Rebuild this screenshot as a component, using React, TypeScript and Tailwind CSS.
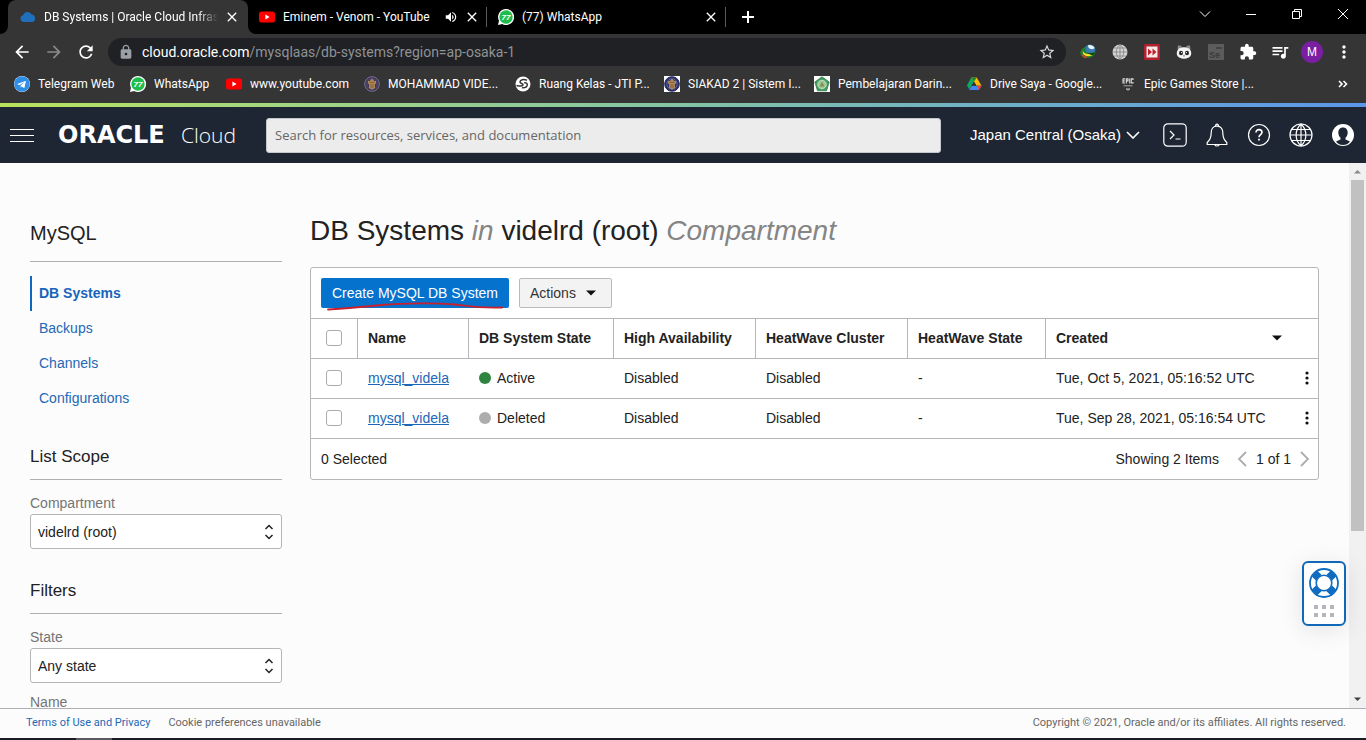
import type { ReactNode } from "react";
import {
  MdArrowBack,
  MdArrowForward,
  MdClose,
  MdExtension,
  MdLock,
  MdMoreVert,
  MdQueueMusic,
  MdRefresh,
  MdStarBorder,
  MdVolumeUp,
} from "react-icons/md";
import { FaTelegram } from "react-icons/fa";

const UI = "font-[Roboto,'Noto_Sans',sans-serif]";
const ARIAL = "font-['Liberation_Sans',Arial,sans-serif]";

/* ---------- favicons ---------- */

function CloudIcon() {
  return (
    <svg viewBox="0 0 16 16" className="size-4 shrink-0" aria-hidden="true">
      <path d="M3.6 13a3.4 3.4 0 0 1-.5-6.7A4.6 4.6 0 0 1 11.700 5.600 3.800 3.800 0 0 1 12.400 13Z" fill="#1f6fbd" />
    </svg>
  );
}

function YouTubeIcon() {
  return (
    <svg viewBox="0 0 16 16" className="size-4 shrink-0" aria-hidden="true">
      <rect x="0" y="2.500" width="16" height="11" rx="2.500" fill="#f00" />
      <path d="M6.400 5.600v4.800L10.600 8Z" fill="#fff" />
    </svg>
  );
}

function WhatsAppIcon() {
  return (
    <svg viewBox="0 0 16 16" className="size-4 shrink-0" aria-hidden="true">
      <path d="M8 0a8 8 0 1 1-3.800 15L0 16l1-4.200A8 8 0 0 1 8 0Z" fill="#fff" />
      <circle cx="8" cy="8" r="6.700" fill="#1fbd4c" />
      <text x="8" y="11" textAnchor="middle" fontSize="8" fontStyle="italic" fontWeight="bold" fontFamily="Liberation Sans" fill="#fff">
        77
      </text>
    </svg>
  );
}

function TelegramIcon() {
  return (
    <span className="grid size-4 shrink-0 place-items-center rounded-full bg-white">
      <FaTelegram className="size-4 text-[#2f8fe6]" />
    </span>
  );
}

function CampusIcon({ framed }: { framed?: boolean }) {
  return (
    <svg viewBox="0 0 16 16" className="size-4 shrink-0" aria-hidden="true">
      {framed && <rect width="16" height="16" fill="#fff" />}
      <circle cx="8" cy="8" r="7.300" fill={framed ? "#2a2f6e" : "#3b3550"} stroke={framed ? "#23285f" : "#7d6f9c"} strokeWidth="1" />
      <circle cx="8" cy="8" r="5.200" fill="none" stroke={framed ? "#6c70a6" : "#5a5080"} strokeWidth="0.800" />
      <path d="M8 2.600 10.200 5H12v2.500l-1 .6V12l-3 1.600L5 12V8.100l-1-.6V5h1.800Z" fill="#b08a52" />
      <path d="M5.500 6.400h5M5.800 9h4.400M6 11h4" stroke="#7a4f3c" strokeWidth="0.800" />
    </svg>
  );
}

function ClassroomIcon() {
  return (
    <svg viewBox="0 0 16 16" className="size-4 shrink-0" aria-hidden="true">
      <circle cx="8" cy="8" r="7.500" fill="#fff" />
      <path d="M1.500 9.500c3 .8 6.500.8 6.500-.8S4.800 8 5 5.800 8.500 3 12 4.200M9.200 6.800c2.300-.3 3.300.7 3 2.400S10 12 7 11.800" fill="none" stroke="#353535" strokeWidth="1.500" />
    </svg>
  );
}

function LearningIcon() {
  return (
    <svg viewBox="0 0 16 16" className="size-4 shrink-0" aria-hidden="true">
      <rect width="16" height="16" fill="#fff" />
      <path d="M8 .8 15.200 6l-2.700 8.800h-9L.8 6Z" fill="#3f9a5c" stroke="#2f7d48" strokeWidth="0.800" />
      <circle cx="8" cy="8.500" r="4.300" fill="#9cc79a" stroke="#dcebd8" strokeWidth="0.700" />
      <path d="M5.500 10.500h5L8 5.500Z" fill="#8b8f4e" />
    </svg>
  );
}

function DriveIcon() {
  return (
    <svg viewBox="0 0 16 16" className="size-4 shrink-0" aria-hidden="true">
      <path d="M5.300 1.500 1 9.200l2.300 4.300 4.700-8Z" fill="#0da960" />
      <path d="M5.300 1.500h5.400l4.800 8.200h-4.900Z" fill="#ffba00" />
      <path d="m5.300 1.500 2.700 4 2.700-4Z" fill="#188038" />
      <path d="M5.700 9.700h9.800l-2.600 4.300H3.300Z" fill="#4285f4" />
      <path d="M10.600 9.700h4.900L12.900 14Z" fill="#ea4335" />
      <path d="M8 5.700 5.600 9.700h4.800Z" fill="#353535" />
    </svg>
  );
}

function EpicIcon() {
  return (
    <svg viewBox="0 0 16 16" className="size-4 shrink-0" aria-hidden="true">
      <path d="M3 2.500v5M3 2.900h2M3 4.900h1.700M3 7h2M6.300 7.500V2.900h1.700v2H6.300M9.700 2.500v5M13 3.900v-1h-1.700V7H13V6" fill="none" stroke="#dadada" strokeWidth="1.100" />
      <path d="M3.500 9.800h9M6 12.900h4l-2 1.400Z" fill="#a5a5a5" stroke="#a5a5a5" strokeWidth="1" />
    </svg>
  );
}

/* ---------- browser chrome ---------- */

function TabStrip() {
  return (
    <div className="flex h-[34px] bg-black pl-2 text-xs text-white">
      <div className="relative flex w-60 shrink-0 items-center rounded-t-lg bg-[#353535] pl-3">
        <svg viewBox="0 0 8 8" className="absolute bottom-0 -left-2 size-2" aria-hidden="true">
          <path d="M8 0v8H0A8 8 0 0 0 8 0Z" fill="#353535" />
        </svg>
        <svg viewBox="0 0 8 8" className="absolute -right-2 bottom-0 size-2" aria-hidden="true">
          <path d="M0 0v8h8A8 8 0 0 1 0 0Z" fill="#353535" />
        </svg>
        <CloudIcon />
        <span className="ml-2 w-[174px] whitespace-nowrap [mask-image:linear-gradient(to_right,#000_88%,transparent)]">
          DB Systems | Oracle Cloud Infras
        </span>
        <button type="button" aria-label="Close tab" className="ml-1 grid size-5 place-items-center">
          <MdClose className="size-4" />
        </button>
      </div>
      <div className="flex w-[239px] shrink-0 items-center pl-[11px]">
        <YouTubeIcon />
        <span className="ml-2 flex-1 whitespace-nowrap">Eminem - Venom - YouTube</span>
        <MdVolumeUp className="size-3.5" />
        <button type="button" aria-label="Close tab" className="mx-1 grid size-5 place-items-center">
          <MdClose className="size-4" />
        </button>
        <span className="h-5 w-px bg-[#5a5a5a]" />
      </div>
      <div className="flex w-[239px] shrink-0 items-center pl-[11px]">
        <WhatsAppIcon />
        <span className="ml-2 flex-1 whitespace-nowrap">(77) WhatsApp</span>
        <button type="button" aria-label="Close tab" className="mx-1 grid size-5 place-items-center">
          <MdClose className="size-4" />
        </button>
        <span className="h-5 w-px bg-[#5a5a5a]" />
      </div>
      <button type="button" aria-label="New tab" className="ml-2 grid w-7 place-items-center">
        <svg viewBox="0 0 12 12" className="size-3" aria-hidden="true">
          <path d="M6 0v12M0 6h12" stroke="#fff" strokeWidth="2" />
        </svg>
      </button>
      <div className="ml-auto flex h-7">
        {(
          [
            ["Search tabs", "M1 3.500l5 5 5-5"],
            ["Minimize", "M1 6.500h10"],
            ["Restore", "M1.500 3.500h7v7h-7ZM3.500 3.500v-2h7v7h-2"],
            ["Close", "M1 1l10 10M11 1 1 11"],
          ] as const
        ).map(([label, d]) => (
          <button key={label} type="button" aria-label={label} className="grid w-[46px] place-items-center">
            <svg viewBox="0 0 12 12" className="size-3" aria-hidden="true">
              <path d={d} fill="none" stroke="#fff" strokeWidth="1" />
            </svg>
          </button>
        ))}
      </div>
    </div>
  );
}

function ToolButton({ label, children }: { label: string; children: ReactNode }) {
  return (
    <button type="button" aria-label={label} className="grid h-8 w-8 shrink-0 place-items-center text-white">
      {children}
    </button>
  );
}

function Toolbar() {
  return (
    <div className="flex h-9 items-center bg-[#353535] px-1.5">
      <ToolButton label="Back">
        <MdArrowBack className="size-5" />
      </ToolButton>
      <ToolButton label="Forward">
        <MdArrowForward className="size-5 text-[#8a8a8a]" />
      </ToolButton>
      <ToolButton label="Reload">
        <MdRefresh className="size-5" />
      </ToolButton>
      <div className="mx-1.5 flex h-7 flex-1 items-center rounded-full bg-[#202124] px-2.5">
        <MdLock className="size-4 text-[#9aa0a6]" />
        <span className="ml-2 flex-1 text-sm whitespace-nowrap text-[#8f9296]">
          <span className="text-white">cloud.oracle.com</span>/mysqlaas/db-systems?region=ap-osaka-1
        </span>
        <button type="button" aria-label="Bookmark this page">
          <MdStarBorder className="size-[18px] text-[#d8d8d8]" />
        </button>
      </div>
      <ToolButton label="Download manager">
        <svg viewBox="0 0 16 16" className="size-4" aria-hidden="true">
          <circle cx="9.800" cy="6" r="5.500" fill="#3b78b4" />
          <path d="M8 1.200c3-.8 5.500.5 6.700 2.800-2 1.800-4.700 1.500-6.200-.2Z" fill="#e4f3f6" />
          <path d="M.3 9C.8 5 3.500 2.800 6.500 3.300 5 4.800 5 7.500 7.500 9l8.200-.7c-1 3.700-4.700 6-8.700 5.700C3.500 13.700.5 12.500.3 9Z" fill="#1e7f2c" />
          <path d="M3 6.500c0 2.800 4.500 4.500 9.500 3l-.5 1.800C7.500 13.500 1.500 11.500 3 6.500Z" fill="#f7e22c" />
          <path d="m1.500 10.500 5.500 2-1 2C4 14.200 2 12.500 1.500 10.500Z" fill="#c9432c" />
          <path d="M7.500 8.800c2 .8 5 .7 8-.5l-2 2.500c-2.500.3-5-.2-6-2Z" fill="#0f3d14" />
        </svg>
      </ToolButton>
      <ToolButton label="Globe extension">
        <svg viewBox="0 0 16 16" className="size-4" aria-hidden="true">
          <circle cx="8" cy="8" r="7.500" fill="#d4d4d4" />
          <path d="M8 .5v15M.5 8h15M2 4h12M2 12h12M8 .5C3 5 3 11 8 15.500 13 11 13 5 8 .5Z" fill="none" stroke="#777" strokeWidth="0.700" />
        </svg>
      </ToolButton>
      <ToolButton label="Fast forward extension">
        <svg viewBox="0 0 16 16" className="size-4" aria-hidden="true">
          <rect width="16" height="16" rx="1.500" fill="#b3202f" />
          <rect x="2.500" y="2.500" width="11" height="11" fill="#f6e9e6" />
          <path d="m4 4.500 4 3.500-4 3.500ZM8.500 4.500l4 3.500-4 3.500Z" fill="#c2202f" />
        </svg>
      </ToolButton>
      <ToolButton label="Panda extension">
        <svg viewBox="0 0 16 16" className="size-4" aria-hidden="true">
          <path d="M2 1.500h2.500L6 3h4l1.500-1.500H14l.5 4H1.500Z" fill="#8c8c8c" />
          <path d="M3 4.500c3-1.300 7-1.300 10 0 2 2 2.700 4 2 6.500-1 2.700-4 3.700-7 3.700S2 13.700 1 11C.3 8.500 1 6.500 3 4.500Z" fill="#f4f4f4" />
          <ellipse cx="5" cy="9" rx="2" ry="2.300" fill="#222" />
          <ellipse cx="11" cy="9" rx="2" ry="2.300" fill="#222" />
          <circle cx="5.500" cy="8.600" r="0.600" fill="#fff" />
          <circle cx="10.500" cy="8.600" r="0.600" fill="#fff" />
          <path d="M7 11.500h2l-1 1.200Z" fill="#333" />
        </svg>
      </ToolButton>
      <ToolButton label="Selenium IDE">
        <svg viewBox="0 0 16 16" className="size-4" aria-hidden="true">
          <rect width="16" height="16" fill="#5c5c5c" />
          <path d="M8 4h6" stroke="#3b3b3b" strokeWidth="1.500" />
          <text x="1" y="14" fontSize="9" fontWeight="bold" fontFamily="Liberation Sans" fill="#3b3b3b">
            Se
          </text>
        </svg>
      </ToolButton>
      <ToolButton label="Extensions">
        <MdExtension className="size-[18px]" />
      </ToolButton>
      <ToolButton label="Media controls">
        <MdQueueMusic className="size-5" />
      </ToolButton>
      <ToolButton label="Profile">
        <span className={`grid size-[22px] place-items-center rounded-full bg-[#7b1fa2] text-xs ${ARIAL}`}>M</span>
      </ToolButton>
      <ToolButton label="Menu">
        <MdMoreVert className="size-5" />
      </ToolButton>
    </div>
  );
}

const bookmarks: [string, ReactNode][] = [
  ["Telegram Web", <TelegramIcon />],
  ["WhatsApp", <WhatsAppIcon />],
  ["www.youtube.com", <YouTubeIcon />],
  ["MOHAMMAD VIDE...", <CampusIcon />],
  ["Ruang Kelas - JTI P...", <ClassroomIcon />],
  ["SIAKAD 2 | Sistem I...", <CampusIcon framed />],
  ["Pembelajaran Darin...", <LearningIcon />],
  ["Drive Saya - Google...", <DriveIcon />],
  ["Epic Games Store |...", <EpicIcon />],
];

function Bookmarks() {
  return (
    <div className="flex h-[33px] bg-[#353535] pr-[18px] pb-[5px] pl-3.5 text-xs text-white">
      <nav className="grid flex-1 grid-cols-[116px_96px_138px_151px_149px_150px_152px_154px_1fr] items-center">
        {bookmarks.map(([label, icon]) => (
          <a key={label} href="#" className="flex items-center gap-2 whitespace-nowrap">
            {icon}
            {label}
          </a>
        ))}
      </nav>
      <button type="button" aria-label="More bookmarks">
        <svg viewBox="0 0 10 8" className="h-2 w-2.5" aria-hidden="true">
          <path d="m1 1 3 3-3 3M5.500 1l3 3-3 3" fill="none" stroke="#fff" strokeWidth="1.600" />
        </svg>
      </button>
    </div>
  );
}

/* ---------- console header ---------- */

function HeaderButton({ label, children }: { label: string; children: ReactNode }) {
  return (
    <button type="button" aria-label={label} className="grid size-6 place-items-center">
      <svg viewBox="0 0 24 24" className="size-6" fill="none" stroke="#fff" strokeWidth="1.200" aria-hidden="true">
        {children}
      </svg>
    </button>
  );
}

function ConsoleHeader() {
  return (
    <header className="flex h-14 shrink-0 items-center bg-[#1d2632] pr-[11px] pl-2.5 text-white">
      <button type="button" aria-label="Navigation menu" className="flex w-6 flex-col gap-[5px]">
        <span className="h-px bg-white" />
        <span className="h-px bg-white" />
        <span className="h-px bg-white" />
      </button>
      <a href="#" className="ml-6 flex w-[208px] items-baseline whitespace-nowrap">
        <span className="w-[123px] font-['DejaVu_Sans',sans-serif] text-2xl leading-6 font-bold">ORACLE</span>
        <span className="font-['Open_Sans',sans-serif] text-[21px] leading-6 font-light">Cloud</span>
      </a>
      <input
        type="text"
        aria-label="Search"
        placeholder="Search for resources, services, and documentation"
        className="h-[35px] min-w-0 flex-1 rounded-[3px] border border-[#c4c8cc] bg-[#ececec] px-2 font-['Open_Sans',sans-serif] text-[13px] placeholder:text-[#666]"
      />
      <button type="button" className={`ml-[29px] flex w-[170px] items-center justify-between text-[15px] whitespace-nowrap ${ARIAL}`}>
        Japan Central (Osaka)
        <svg viewBox="0 0 14 8" className="h-2 w-3.5" aria-hidden="true">
          <path d="m1 1 6 6 6-6" fill="none" stroke="#fff" strokeWidth="1.600" />
        </svg>
      </button>
      <div className="ml-[23px] flex gap-[18px]">
        <HeaderButton label="Cloud Shell">
          <rect x="0.800" y="0.800" width="22.400" height="22.400" rx="4" />
          <path d="m7 8 4 4-4 4M12.500 16h5" />
        </HeaderButton>
        <HeaderButton label="Announcements">
          <path d="M12 3.200c-4 0-5.800 3-5.800 6.500 0 5-1.200 7.300-4 9.800v2h19.600v-2c-2.800-2.500-4-4.800-4-9.800 0-3.500-1.800-6.500-5.800-6.500ZM10.600 3.200a1.500 1.500 0 1 1 2.800 0M9.800 21.700a2.300 1.800 0 0 0 4.400 0" />
        </HeaderButton>
        <HeaderButton label="Help">
          <circle cx="12" cy="12" r="10.500" />
          <path d="M9 9.500C9 7.500 10.300 6.600 12 6.600s3 1 3 2.700c0 2.200-3 2.400-3 4.900" strokeWidth="1.600" />
          <path d="M12 15.800v1.800" strokeWidth="1.800" />
        </HeaderButton>
        <HeaderButton label="Language">
          <circle cx="12" cy="12" r="11" />
          <path d="M12 1v22M1 12h22M2.800 6.500h18.400M2.800 17.500h18.400M12 1C5.500 7 5.500 17 12 23 18.500 17 18.500 7 12 1Z" />
        </HeaderButton>
        <HeaderButton label="Profile">
          <circle cx="12" cy="12" r="11" fill="#fff" stroke="none" />
          <path d="M12 4.500c-3 0-4.700 2.200-4.700 5 0 2.200.8 4 2.200 5.200v1.800c-1.500.8-3.200 1.200-4.500 2.200 1.700 2 4.200 3.300 7 3.300s5.300-1.300 7-3.300c-1.300-1-3-1.400-4.500-2.200v-1.800c1.400-1.200 2.200-3 2.200-5.200 0-2.800-1.700-5-4.700-5Z" fill="#1d2632" stroke="none" />
        </HeaderButton>
      </div>
    </header>
  );
}

/* ---------- sidebar ---------- */

function SelectField({ id, label, value }: { id: string; label: string; value: string }) {
  return (
    <div className="mt-[13px]">
      <label htmlFor={id} className="block h-[21px] text-sm leading-[21px] text-[#747474]">
        {label}
      </label>
      <div className="relative">
        <select id={id} className="block h-[35px] w-full appearance-none rounded-[3px] border border-[#b3b5b8] bg-white px-[7px] text-sm text-[#222]">
          <option>{value}</option>
        </select>
        <svg viewBox="0 0 10 16" className="pointer-events-none absolute top-2.5 right-2 h-4 w-2.5" aria-hidden="true">
          <path d="m1.500 5 3.500-3.500L8.500 5M1.500 11 5 14.500 8.500 11" fill="none" stroke="#222" strokeWidth="1.500" />
        </svg>
      </div>
    </div>
  );
}

function Sidebar() {
  return (
    <aside className="w-[252px] shrink-0 pt-14">
      <h2 className="border-b border-[#b0b0b4] pb-3.5 text-xl leading-7">MySQL</h2>
      <nav className="mt-3.5 flex flex-col text-sm text-[#2468b4]">
        {["DB Systems", "Backups", "Channels", "Configurations"].map((item, i) => (
          <a
            key={item}
            href="#"
            className={
              i === 0
                ? "flex h-[35px] items-center border-l-2 border-[#0d68be] pb-0.5 pl-[7px] font-bold text-[#1765bb]"
                : "flex h-[35px] items-center border-l-2 border-transparent pb-0.5 pl-[7px]"
            }
          >
            {item}
          </a>
        ))}
      </nav>
      <h3 className="mt-[29px] border-b border-[#b0b0b4] pb-2.5 text-[17px] leading-6">List Scope</h3>
      <SelectField id="compartment" label="Compartment" value="videlrd (root)" />
      <h3 className="mt-[30px] border-b border-[#b0b0b4] pb-2.5 text-[17px] leading-6">Filters</h3>
      <SelectField id="state" label="State" value="Any state" />
      <label htmlFor="name" className="mt-[9px] block text-sm leading-[21px] text-[#747474]">
        Name
      </label>
      <input id="name" type="text" className="h-[35px] w-full rounded-[3px] border border-[#b3b5b8] bg-white px-2 text-sm" />
    </aside>
  );
}

/* ---------- table ---------- */

const rows = [
  { name: "mysql_videla", state: "Active", active: true, created: "Tue, Oct 5, 2021, 05:16:52 UTC" },
  { name: "mysql_videla", state: "Deleted", active: false, created: "Tue, Sep 28, 2021, 05:16:54 UTC" },
];

function CheckBox({ label }: { label: string }) {
  return <input type="checkbox" aria-label={label} className="ml-[15px] block size-4 appearance-none rounded-[3px] border border-[#a9abae] bg-white" />;
}

function SystemsTable() {
  return (
    <table className="w-full table-fixed border-separate border-spacing-0 text-sm">
      <colgroup>
        <col className="w-[47px]" />
        <col className="w-[111px]" />
        <col className="w-[145px]" />
        <col className="w-[142px]" />
        <col className="w-[152px]" />
        <col className="w-[138px]" />
        <col />
      </colgroup>
      <thead>
        <tr className="text-left [&>th]:h-10 [&>th]:border-t [&>th]:border-[#b4b6ba] [&>th]:pt-0 [&>th]:pb-0.5">
          <th className="border-r px-0">
            <CheckBox label="Select all" />
          </th>
          {["Name", "DB System State", "High Availability", "HeatWave Cluster", "HeatWave State"].map((h) => (
            <th key={h} className="border-r pr-0 pl-2.5 whitespace-nowrap">
              {h}
            </th>
          ))}
          <th className="pr-9 pl-2.5">
            <div className="flex items-center justify-between">
              Created
              <svg viewBox="0 0 10 6" className="h-1.5 w-2.5" aria-hidden="true">
                <path d="M0 .5h10L5 5.500Z" fill="#111" />
              </svg>
            </div>
          </th>
        </tr>
      </thead>
      <tbody>
        {rows.map((r) => (
          <tr key={r.created} className="[&>td]:h-10 [&>td]:border-t [&>td]:border-[#b4b6ba] [&>td]:pt-0 [&>td]:pb-0.5">
            <td className="px-0">
              <CheckBox label={`Select ${r.name}`} />
            </td>
            <td className="pr-0 pl-2.5">
              <a href="#" className="text-[#1a66b8] underline">
                {r.name}
              </a>
            </td>
            <td className="pr-0 pl-2.5">
              <span className="flex items-center gap-1.5">
                <span className={r.active ? "size-3 rounded-full bg-[#2e8540]" : "size-3 rounded-full bg-[#adadad]"} />
                {r.state}
              </span>
            </td>
            <td className="pr-0 pl-2.5">Disabled</td>
            <td className="pr-0 pl-2.5">Disabled</td>
            <td className="pr-0 pl-2.5">-</td>
            <td className="pr-[9px] pl-2.5">
              <div className="flex items-center justify-between whitespace-nowrap">
                {r.created}
                <button type="button" aria-label="Row actions">
                  <svg viewBox="0 0 4 14" className="h-3.5 w-1" aria-hidden="true">
                    <circle cx="2" cy="2" r="1.600" fill="#111" />
                    <circle cx="2" cy="7" r="1.600" fill="#111" />
                    <circle cx="2" cy="12" r="1.600" fill="#111" />
                  </svg>
                </button>
              </div>
            </td>
          </tr>
        ))}
      </tbody>
    </table>
  );
}

function Pager({ label, d }: { label: string; d: string }) {
  return (
    <button type="button" aria-label={label}>
      <svg viewBox="0 0 10 16" className="h-4 w-2.5" aria-hidden="true">
        <path d={d} fill="none" stroke="#adadad" strokeWidth="1.800" />
      </svg>
    </button>
  );
}

function MainPanel() {
  return (
    <main className="min-w-0 flex-1 pt-[50px]">
      <h1 className="mb-[18px] text-[28px] leading-9 whitespace-nowrap">
        DB Systems <em className="text-[#858585]">in</em> videlrd (root) <em className="text-[#858585]">Compartment</em>
      </h1>
      <section className="rounded-[3px] border border-[#b4b6ba] bg-white">
        <div className="flex gap-2.5 p-2.5 text-sm">
          <button type="button" className="relative h-[30px] rounded-[2px] bg-[#0572ce] px-[11px] whitespace-nowrap text-white">
            Create MySQL DB System
            <svg viewBox="0 0 180 10" className="absolute top-6 left-1.5 h-2.5 w-[180px]" aria-hidden="true">
              <path d="M1 7.500C22 6.500 36 5 54 3 78 .9 112 .9 128 2.500c14 1.500 20 3.800 47 3" fill="none" stroke="#c8202c" strokeWidth="1.800" strokeLinecap="round" />
            </svg>
          </button>
          <button type="button" className="flex h-[30px] w-[93px] items-center justify-between rounded-[2px] border border-[#b8babd] bg-[#f3f3f3] pr-[15px] pl-2.5 text-[#333]">
            Actions
            <svg viewBox="0 0 10 6" className="h-1.5 w-2.5" aria-hidden="true">
              <path d="M0 .5h10L5 5.500Z" fill="#111" />
            </svg>
          </button>
        </div>
        <SystemsTable />
        <div className="flex h-[41px] items-center border-t border-[#b4b6ba] pr-2 pl-2.5 text-sm">
          <span className="flex-1">0 Selected</span>
          <span>Showing 2 Items</span>
          <div className="ml-[18px] flex items-center gap-[9px]">
            <Pager label="Previous page" d="M9 1 2 8l7 7" />
            <span>1 of 1</span>
            <Pager label="Next page" d="m1 1 7 7-7 7" />
          </div>
        </div>
      </section>
    </main>
  );
}

function SupportWidget() {
  return (
    <button
      type="button"
      aria-label="Support"
      className="absolute right-5 bottom-[82px] flex h-[65px] w-11 flex-col items-center gap-[7px] rounded-md border-2 border-[#1268b8] bg-white pt-[5px] shadow-[0_4px_24px_rgba(0,0,0,0.10)]"
    >
      <svg viewBox="0 0 30 30" className="size-[30px]" aria-hidden="true">
        <g fill="none" stroke="#0f6cc0">
          <circle cx="15" cy="15" r="14" strokeWidth="1.800" />
          <circle cx="15" cy="15" r="7.800" strokeWidth="1.600" />
          <path d="m5.500 5.500 4.200 4.200M24.500 5.500l-4.200 4.200M5.500 24.500l4.200-4.200M24.500 24.500l-4.200-4.200" strokeWidth="8" />
        </g>
      </svg>
      <span className="grid grid-cols-3 gap-1">
        {[0, 1, 2, 3, 4, 5].map((n) => (
          <span key={n} className="size-1 bg-[#b4b6bc]" />
        ))}
      </span>
    </button>
  );
}

function ScrollTrack() {
  return (
    <div className="flex w-[17px] shrink-0 flex-col items-center bg-[#f1f1f1]">
      <svg viewBox="0 0 17 17" className="size-[17px]" aria-hidden="true">
        <path d="M5 10.500h7L8.500 7Z" fill="#8a8a8a" />
      </svg>
      <div className="w-[13px] basis-[351px] bg-[#c1c1c1]" />
      <svg viewBox="0 0 17 17" className="mt-auto size-[17px]" aria-hidden="true">
        <path d="M5 6.500h7L8.500 10Z" fill="#404040" />
      </svg>
    </div>
  );
}

export default function App() {
  return (
    <div className={`flex h-screen flex-col overflow-hidden bg-[#fcfcfc] ${UI}`}>
      <div className="shrink-0">
        <TabStrip />
        <Toolbar />
        <Bookmarks />
      </div>
      <div className="h-1 shrink-0 bg-linear-to-r from-[#b9e35c] via-[#84c3a4] to-[#5a96ea]" />
      <ConsoleHeader />
      <div className={`relative flex min-h-0 flex-1 text-[#222] ${ARIAL}`}>
        <div className="flex min-w-0 flex-1 gap-7 overflow-hidden px-[30px]">
          <Sidebar />
          <MainPanel />
        </div>
        <ScrollTrack />
        <SupportWidget />
      </div>
      <footer className="flex h-[30px] shrink-0 items-center gap-[18px] border-t border-[#b0b0b4] bg-[#fcfcfc] pr-5 pl-[26px] text-[11px] text-[#666]">
        <a href="#" className="text-[#2468b4]">
          Terms of Use and Privacy
        </a>
        <span className="flex-1">Cookie preferences unavailable</span>
        <span>Copyright © 2021, Oracle and/or its affiliates. All rights reserved.</span>
      </footer>
      <div className="h-0.5 shrink-0 bg-[#1c1c26] pl-[76px]">
        <div className="h-0.5 w-9 bg-[#5a5a60]" />
      </div>
    </div>
  );
}
